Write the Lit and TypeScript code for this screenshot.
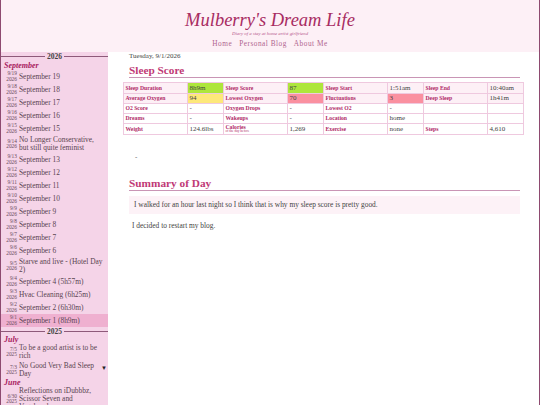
import { LitElement, html, css } from "lit";
import { customElement } from "lit/decorators.js";

type Row = { d: string; y: string; t: string; sel?: boolean };
const r26: Row[] = [
  ["9/19", "September 19"], ["9/18", "September 18"], ["9/17", "September 17"], ["9/16", "September 16"],
  ["9/15", "September 15"], ["9/14", "No Longer Conservative, but still quite feminist"], ["9/13", "September 13"],
  ["9/12", "September 12"], ["9/11", "September 11"], ["9/10", "September 10"], ["9/9", "September 9"],
  ["9/8", "September 8"], ["9/7", "September 7"], ["9/6", "September 6"], ["9/5", "Starve and live - (Hotel Day 2)"],
  ["9/4", "September 4 (5h57m)"], ["9/3", "Hvac Cleaning (6h25m)"], ["9/2", "September 2 (6h30m)"], ["9/1", "September 1 (8h9m)"],
].map(([d, t]) => ({ d, y: "2026", t, sel: d === "9/1" }));
const july: Row[] = [
  { d: "7/5", y: "2025", t: "To be a good artist is to be rich" },
  { d: "7/3", y: "2025", t: "No Good Very Bad Sleep Day" },
];
const june: Row[] = [{ d: "6/30", y: "2025", t: "Reflections on iDubbbz, Scissor Seven and Vagabonds" }];

const cells: [string, string, string?][][] = [
  [["Sleep Duration", "8h9m", "g"], ["Sleep Score", "87", "g"], ["Sleep Start", "1:51am"], ["Sleep End", "10:40am"]],
  [["Average Oxygen", "94", "y"], ["Lowest Oxygen", "70", "r"], ["Fluctuations", "3", "r"], ["Deep Sleep", "1h41m"]],
  [["O2 Score", "-"], ["Oxygen Drops", "-"], ["Lowest O2", "-"], ["", ""]],
  [["Dreams", "-"], ["Wakeups", "-"], ["Location", "home"], ["", ""]],
  [["Weight", "124.6lbs"], ["Calories", "1,269"], ["Exercise", "none"], ["Steps", "4,610"]],
];

@customElement("app-root")
export class AppRoot extends LitElement {
  static styles = css`
    :host {
      display: block; width: 540px; height: 405px; overflow: hidden; box-sizing: border-box;
      position: relative; background: #fff; border-left: 1px solid #8e4a70; border-right: 1px solid #8e4a70;
      font-family: "Liberation Serif", serif; color: #444;
    }
    header { height: 52px; background: #fdf0f6; display: flex; flex-direction: column; align-items: center; padding-top: 11px; box-sizing: border-box; }
    .title { font-size: 18.5px; line-height: 18px; font-style: italic; color: #a82c62; }
    .sub { font-size: 4.8px; line-height: 6px; font-style: italic; color: #b5548a; margin-top: 2px; }
    nav { display: flex; gap: 7px; font-size: 7.3px; line-height: 10px; letter-spacing: 0.5px; color: #b0648e; margin-top: 2px; }
    .body { display: flex; height: 353px; }
    aside { width: 107px; flex: none; background: #f5d4e8; overflow: hidden; position: relative; }
    .year { height: 9px; display: flex; align-items: center; gap: 2px; font-size: 7.5px; font-weight: bold; color: #444; }
    .year::before, .year::after { content: ""; flex: 1; height: 1px; background: #8e5a7a; }
    .month { height: 7px; line-height: 7px; padding-left: 3px; font-size: 8px; font-style: italic; font-weight: bold; color: #a8205e; }
    .month.first { height: 9px; line-height: 9px; }
    .row { display: flex; align-items: center; gap: 2px; padding: 1px 4px 1px 5px; font-size: 7.4px; line-height: 8px; color: #5a4450; }
    .row.sel { background: #efb0d0; }
    .stack { flex: none; width: 11px; text-align: right; font-size: 5.4px; line-height: 5.5px; color: #6a4a5c; white-space: nowrap; }
    .arrow { position: absolute; left: 100px; top: 313px; font-size: 6px; line-height: 6px; color: #222; }
    main { flex: 1; padding: 0 19px 0 21px; min-width: 0; }
    .date { font-size: 7px; line-height: 8px; }
    h2 { margin: 0; font-size: 11.3px; line-height: 13px; color: #bf3a76; border-bottom: 1px solid #c995b5; }
    .h1 { margin-top: 4px; }
    table { border-collapse: collapse; table-layout: fixed; width: 400px; margin: 4px 0 0 -6px; }
    td { border: 1px solid #efc9df; padding: 0 0 0 1.5px; height: 9px; font-size: 7px; line-height: 9px; color: #444; overflow: hidden; white-space: nowrap; }
    td.l { font-size: 5.7px; font-weight: bold; color: #b02a68; width: 64px; box-sizing: border-box; }
    td.v { width: 36px; box-sizing: border-box; }
    tr.tint td { background: #fdf0f6; }
    tr.tall td { height: 11px; }
    tr.tint td.g { background: #aee63c; }
    tr.tint td.y { background: #fde87a; }
    tr.tint td.r { background: #fa90a0; }
    .small { display: block; font-size: 3.5px; line-height: 3px; font-weight: normal; }
    .cal { display: block; line-height: 5px; }
    .dash { font-size: 7px; line-height: 8px; margin: 18px 0 0 6px; }
    .h2 { margin-top: 16px; }
    .box { background: #fdf2f7; margin-top: 5px; padding: 5px; font-size: 7.4px; line-height: 8px; height: 8px; }
    .p { font-size: 7.4px; line-height: 8px; margin: 8px 0 0 3px; }
  `;

  private rows(list: Row[]) {
    return list.map(
      (r) => html`<div class="row ${r.sel ? "sel" : ""}">
        <div class="stack">${r.d}<br />${r.y}</div>
        <div>${r.t}</div>
      </div>`
    );
  }

  render() {
    return html`
      <header>
        <div class="title">Mulberry's Dream Life</div>
        <div class="sub">Diary of a stay at home artist girlfriend</div>
        <nav><span>Home</span><span>Personal Blog</span><span>About Me</span></nav>
      </header>
      <div class="body">
        <aside>
          <div class="year">2026</div>
          <div class="month first">September</div>
          ${this.rows(r26)}
          <div class="year">2025</div>
          <div class="month">July</div>
          ${this.rows(july)}
          <div class="month">June</div>
          ${this.rows(june)}
          <div class="arrow">▼</div>
        </aside>
        <main>
          <div class="date">Tuesday, 9/1/2026</div>
          <h2 class="h1">Sleep Score</h2>
          <table>
            ${cells.map(
              (row, i) => html`<tr class="${i < 2 ? "tint" : ""} ${i === 0 || i === 4 ? "tall" : ""}">
                ${row.map(
                  ([l, v, c]) => html`<td class="l">
                      ${l === "Calories"
                        ? html`<span class="cal">Calories</span><span class="small">of the day before</span>`
                        : l}
                    </td>
                    <td class="v ${c ?? ""}">${v}</td>`
                )}
              </tr>`
            )}
          </table>
          <div class="dash">-</div>
          <h2 class="h2">Summary of Day</h2>
          <div class="box">I walked for an hour last night so I think that is why my sleep score is pretty good.</div>
          <div class="p">I decided to restart my blog.</div>
        </main>
      </div>
    `;
  }
}
